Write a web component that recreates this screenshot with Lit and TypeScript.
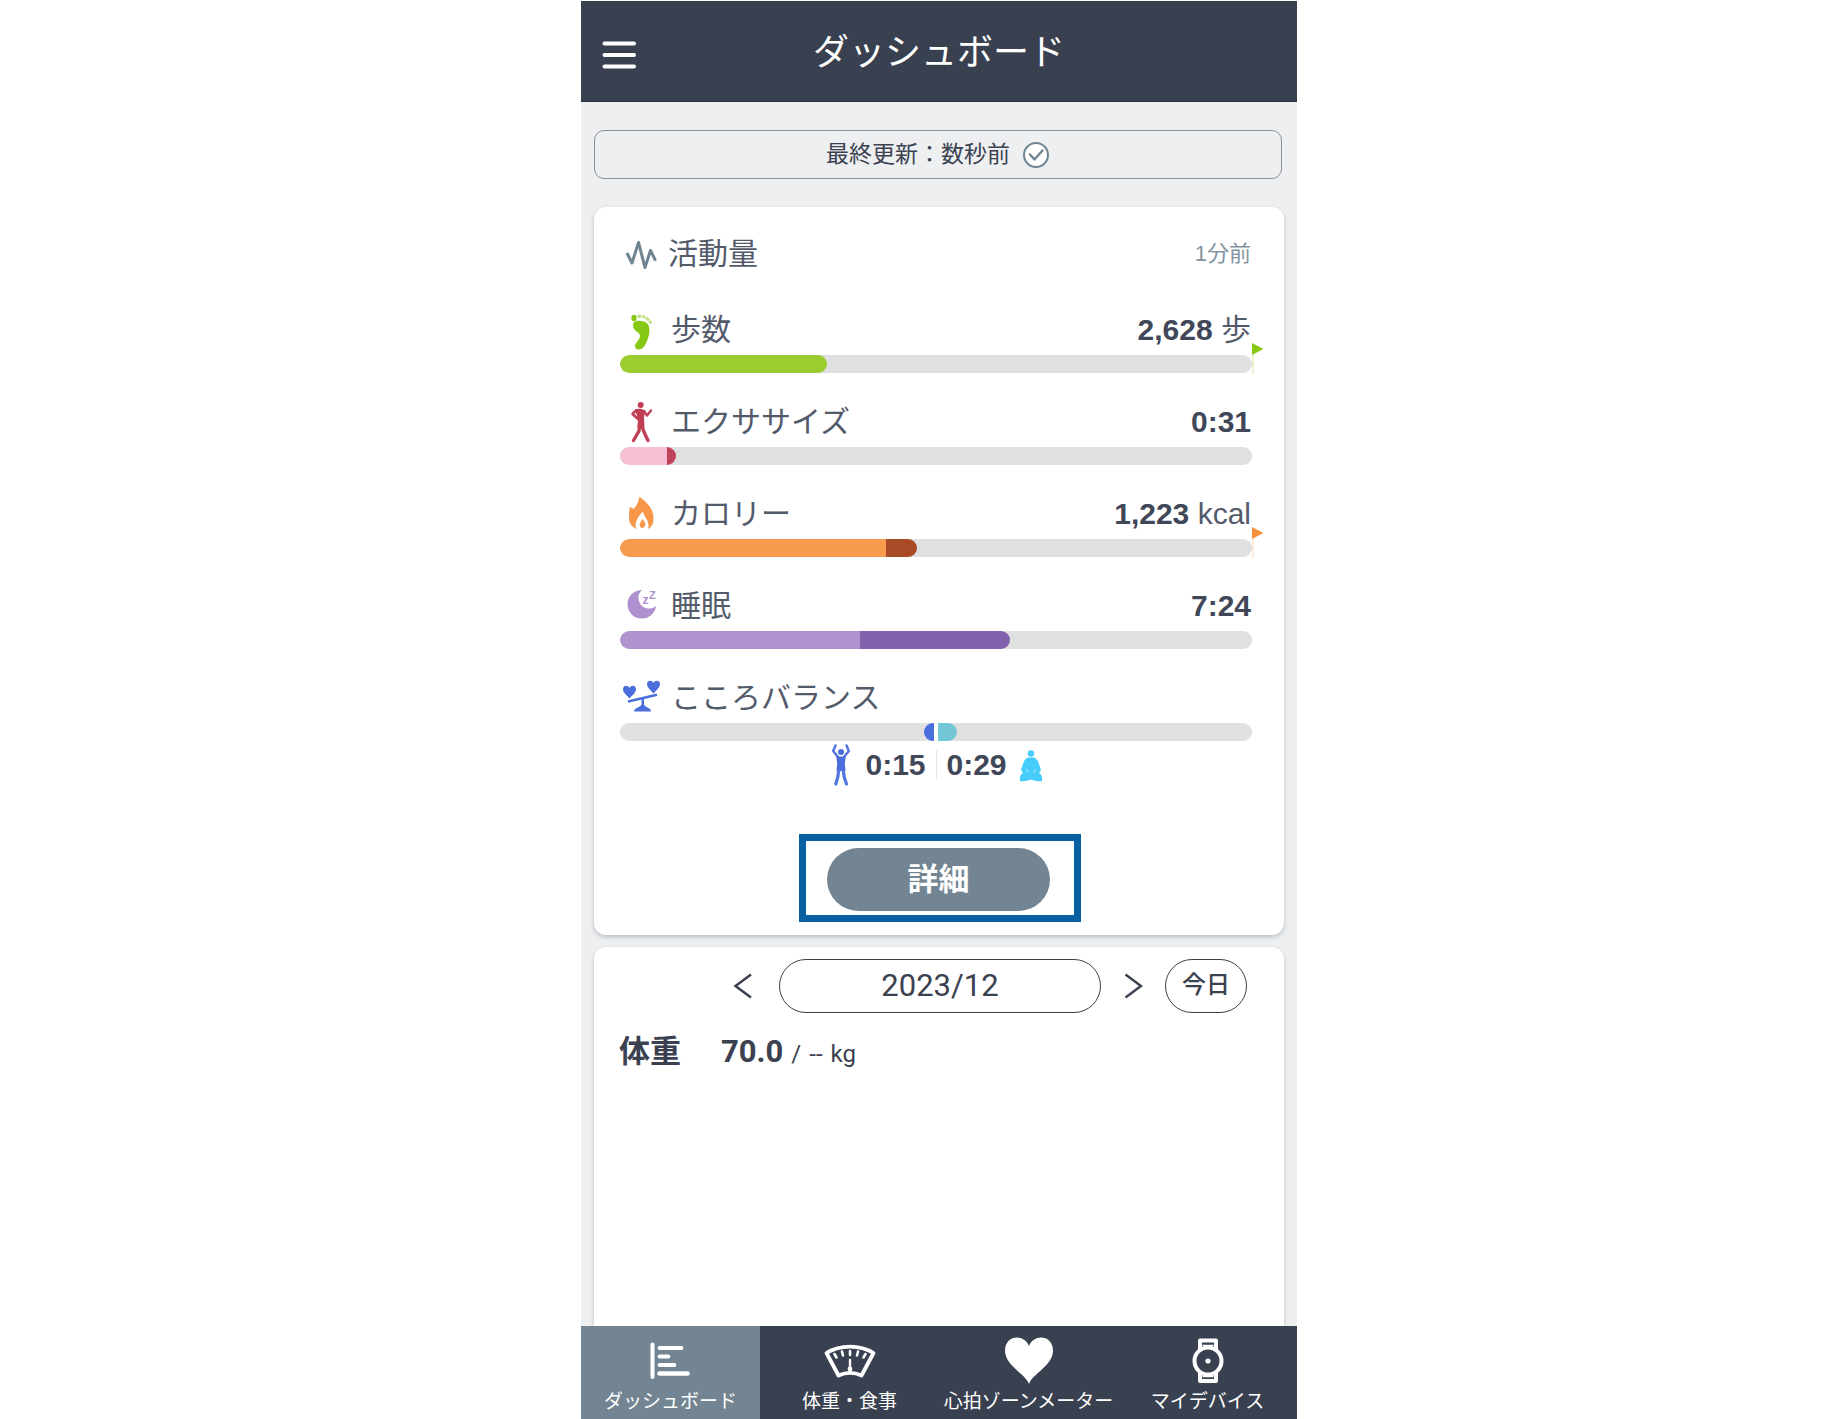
import { LitElement, html, css, nothing, TemplateResult } from "lit";
import { customElement, property } from "lit/decorators.js";

interface Segment {
  start: number;
  width: number;
  color: string;
}

interface Metric {
  label: string;
  value?: string;
  unit?: string;
  icon: TemplateResult;
  segments: Segment[];
  goal?: string;
}

const pulseIcon = html`<svg width="42" height="42" viewBox="0 0 42 42" fill="none" stroke="#708492" stroke-width="3" stroke-linejoin="round" stroke-linecap="round" aria-hidden="true">
  <path d="M7.5 21L12 30L18.500 9.500L25 34.500L30.500 17.500L35 26.500" />
</svg>`;

const footIcon = html`<svg width="42" height="42" viewBox="0 0 42 42" fill="#86c814" aria-hidden="true">
  <path d="M13 16.500C13 11 19 11.500 24 12.500C29.500 14 30 20 29 26C27 33 24 40.500 19 40.500C14.500 40.500 14 36.500 16.500 33.500C20 29 21.500 26.500 18 23.500C15 21.500 13 19.500 13 16.500Z" />
  <ellipse cx="14" cy="9" rx="2.600" ry="3.200" />
  <path d="M17.500 7.500C23 6.500 28 8.500 31 14.500" fill="none" stroke="#86c814" stroke-width="2.800" stroke-dasharray="3.600 0.900" opacity="0.550" />
</svg>`;

const walkIcon = html`<svg width="42" height="42" viewBox="0 0 42 42" fill="none" stroke="#c03f55" stroke-linecap="round" stroke-linejoin="round" aria-hidden="true">
  <circle cx="20.700" cy="4" r="3" fill="#c03f55" stroke="none" />
  <path d="M15 8.500C18 7.500 22 7.500 25 9.500L24 17L24.500 26L17.500 26L18 18Z" fill="#c03f55" stroke="none" />
  <path d="M16 9.500L12.500 13L18 18" stroke-width="2.600" />
  <path d="M24 10L27 14.500L31 9.500" stroke-width="2.400" />
  <path d="M19.500 24L19 30L13.500 39.500" stroke-width="3.400" />
  <path d="M21.500 24L24 31L28 39.500" stroke-width="3.400" />
</svg>`;

const flameIcon = html`<svg width="42" height="42" viewBox="0 0 42 42" fill="#f6974a" aria-hidden="true">
  <path fill-rule="evenodd" d="M19.500 4C25 7.500 33.500 15 33.500 25C33.500 30 32.500 33.500 28 36C29 33 28.500 30 27 27C25.500 24 23.500 22 23 18.500C20 21 17.500 25 16 29C15.200 31.500 15.500 34 16.500 36C12 34 9 30 9 25C9 21 9.500 17 9.500 14C11 14.500 12 15 13.500 16C16.500 13.500 18 9 19.500 4Z" />
  <path d="M22.500 26C24.500 28.500 26 30.500 25 33C24 35.500 20.500 35.500 19.800 33C19.300 30.500 21 28.500 22.500 26Z" />
</svg>`;

const moonIcon = html`<svg width="42" height="42" viewBox="0 0 42 42" fill="#ae90cf" aria-hidden="true">
  <path d="M22 5A14.300 14.300 0 1 0 36 21A10.600 10.600 0 1 1 22 5Z" />
  <text x="22.500" y="19" font-family="Liberation Sans, sans-serif" font-weight="700" font-size="12">z</text>
  <text x="29" y="14" font-family="Liberation Sans, sans-serif" font-weight="700" font-size="11">Z</text>
</svg>`;

const balanceIcon = html`<svg width="42" height="42" viewBox="0 0 42 42" fill="#4a6fdc" aria-hidden="true">
  <path d="M9.500 21.500C6 17.500 3 15.500 3 12C3 8 8 7.500 9.500 11C11 7.500 16 8 16 12C16 15.500 13 17.500 9.500 21.500Z" />
  <path d="M33.500 16.500C30 12.500 27 10.500 27 7C27 3 32 2.500 33.500 6C35 2.500 40 3 40 7C40 10.500 37 12.500 33.500 16.500Z" />
  <path d="M8 24.500L37 17.800" fill="none" stroke="#4a6fdc" stroke-width="2.600" />
  <path d="M21.500 21H24V28C26 30.500 31 31 31 34.500H14C14 31 19.500 30.500 21.500 28Z" />
</svg>`;

const armsUpIcon = html`<svg width="24" height="44" viewBox="0 0 24 44" fill="none" stroke="#5476e0" stroke-linecap="round" stroke-linejoin="round" aria-hidden="true">
  <circle cx="12" cy="9" r="3" fill="#4a6fdc" stroke="none" />
  <path d="M6.500 2.500L4.200 8L9 14M17.500 2.500L19.800 8L15 14" stroke-width="2.500" />
  <path d="M7 12C10 14 14 14 17 12L15.800 20L16.500 28H7.500L8.200 20Z" fill="#4a6fdc" stroke="none" />
  <path d="M9.800 27L8.800 34L6.800 41M14.200 27L15.200 34L17.500 41" stroke-width="3.200" />
</svg>`;

const meditateIcon = html`<svg width="24" height="44" viewBox="0 0 24 44" fill="#45ccfb" aria-hidden="true">
  <circle cx="12" cy="10.500" r="3.200" />
  <path d="M9 14.500H15C19.500 16 20 22 22 27L20 30C22.500 31 23.500 34 23 38C19 38.500 16 38 12 36.500C8 38 5 38.500 1 38C.500 34 1.500 31 4 30L2 27C4 22 4.500 16 9 14.500Z" />
  <path d="M7 26L9.500 29.500M17 26L14.500 29.500" stroke="#fff" stroke-width="1.200" opacity="0.500" />
</svg>`;

const metrics: Metric[] = [
  {
    label: "歩数",
    value: "2,628",
    unit: "歩",
    icon: footIcon,
    goal: "#86c814",
    segments: [{ start: 0, width: 32.8, color: "#9acd2f" }],
  },
  {
    label: "エクササイズ",
    value: "0:31",
    icon: walkIcon,
    segments: [
      { start: 0, width: 7.5, color: "#f9bfd5" },
      { start: 7.5, width: 1.3, color: "#c0435a" },
    ],
  },
  {
    label: "カロリー",
    value: "1,223",
    unit: "kcal",
    icon: flameIcon,
    goal: "#f6923e",
    segments: [
      { start: 0, width: 42.1, color: "#f69a4e" },
      { start: 42.1, width: 4.9, color: "#a94a26" },
    ],
  },
  {
    label: "睡眠",
    value: "7:24",
    icon: moonIcon,
    segments: [
      { start: 0, width: 37.9, color: "#b092cf" },
      { start: 37.9, width: 23.8, color: "#8161ae" },
    ],
  },
  {
    label: "こころバランス",
    icon: balanceIcon,
    segments: [
      { start: 48.1, width: 1.6, color: "#4a6fdc" },
      { start: 49.7, width: 0.6, color: "#ffffff" },
      { start: 50.3, width: 3.1, color: "#74c7d6" },
    ],
  },
];

@customElement("metric-row")
export class MetricRow extends LitElement {
  @property({ attribute: false }) metric!: Metric;

  static styles = css`
    :host {
      display: block;
    }
    .head {
      display: flex;
      align-items: center;
      height: 42px;
      margin-bottom: 4px;
      padding-right: 1px;
      font-size: 30px;
      line-height: 42px;
      color: #535b6b;
    }
    .head svg {
      flex: none;
    }
    .label {
      margin-left: 9px;
      flex: 1;
    }
    .value {
      font-family: "Liberation Sans", "Noto Sans CJK JP", sans-serif;
      color: #535b6b;
    }
    .value strong {
      color: #3f4758;
    }
    .track {
      position: relative;
      height: 18px;
    }
    .bar {
      position: relative;
      height: 100%;
      border-radius: 9px;
      background: #e0e0e0;
      overflow: hidden;
    }
    .segment {
      position: absolute;
      top: 0;
      bottom: 0;
    }
    .segment.first {
      border-radius: 9px 0 0 9px;
    }
    .segment.last {
      border-radius: 0 9px 9px 0;
    }
    .segment.first.last {
      border-radius: 9px;
    }
    .flag {
      position: absolute;
      left: 100%;
      top: -12px;
    }
  `;

  render() {
    const m = this.metric;
    const last = m.segments.length - 1;
    return html`
      <div class="head">
        ${m.icon}
        <span class="label">${m.label}</span>
        ${m.value
          ? html`<span class="value"><strong>${m.value}</strong>${m.unit ? ` ${m.unit}` : nothing}</span>`
          : nothing}
      </div>
      <div class="track">
        <div class="bar">
          ${m.segments.map(
            (s, i) => html`<div
              class="segment ${i === 0 ? "first" : ""} ${i === last ? "last" : ""}"
              style="left:${s.start}%;width:${s.width}%;background:${s.color}"
            ></div>`
          )}
        </div>
        ${m.goal
          ? html`<svg class="flag" width="13" height="32" viewBox="0 0 13 32" aria-hidden="true">
              <path d="M0 0L11.500 6L0 12Z" fill=${m.goal} />
              <path d="M1 12V31" stroke=${m.goal} stroke-width="1.500" opacity="0.250" />
            </svg>`
          : nothing}
      </div>
    `;
  }
}

@customElement("app-root")
export class AppRoot extends LitElement {
  static styles = css`
    :host {
      display: grid;
      grid-template-columns: 581fr minmax(min(100%, 716px), 716fr) 538fr;
      min-height: 100vh;
      background: #fff;
      font-family: Roboto, "Noto Sans CJK JP", sans-serif;
      color: #3b4150;
    }
    *,
    *::before {
      box-sizing: border-box;
    }
    button {
      font: inherit;
      color: inherit;
      background: none;
      border: 0;
      padding: 0;
      cursor: pointer;
    }
    .app {
      grid-column: 2;
      display: flex;
      flex-direction: column;
      margin-top: 1px;
      background: #edeff1;
    }
    .topbar {
      display: grid;
      grid-template-columns: 80px 1fr 80px;
      align-items: center;
      height: 101px;
      background: #394050;
      border-bottom: 1px solid #2b303c;
      color: #fff;
    }
    .menu {
      justify-self: start;
      display: flex;
      margin: 8px 0 0 21px;
    }
    h1 {
      margin: 4px 0 0;
      text-align: center;
      font-size: 36px;
      line-height: 48px;
      font-weight: 400;
    }
    main {
      flex: 1;
      display: flex;
      flex-direction: column;
      padding: 28px 13px 0;
    }
    .status {
      display: flex;
      align-items: center;
      justify-content: center;
      gap: 12px;
      height: 49px;
      margin: 0 2px 28px 0;
      border: 1px solid #8b9096;
      border-radius: 10px;
      font-size: 23px;
      line-height: 32px;
    }
    .card {
      background: #fff;
      border-radius: 12px;
      box-shadow: 0 2px 4px rgba(40, 50, 60, 0.25);
    }
    .activity {
      display: flex;
      flex-direction: column;
      padding: 26px 32px 13px 26px;
      margin-bottom: 12px;
    }
    .activity-head {
      display: flex;
      align-items: center;
      height: 42px;
      margin-bottom: 34px;
      padding-right: 1px;
    }
    h2 {
      margin: 0 0 0 6px;
      flex: 1;
      font-size: 30px;
      line-height: 42px;
      font-weight: 400;
      color: #535b6b;
    }
    .ago {
      font-family: "Liberation Sans", "Noto Sans CJK JP", sans-serif;
      font-size: 22px;
      line-height: 32px;
      color: #84939f;
    }
    .metrics {
      display: flex;
      flex-direction: column;
      gap: 28px;
    }
    .balance {
      display: flex;
      align-items: center;
      justify-content: center;
      gap: 12px;
      height: 44px;
      margin-top: 2px;
      font-family: "Liberation Sans", sans-serif;
      font-size: 30px;
      line-height: 42px;
      font-weight: 700;
      color: #3f4758;
    }
    .times {
      display: flex;
      align-items: center;
      gap: 10px;
    }
    .divider {
      width: 1px;
      height: 30px;
      background: #e4e6e8;
    }
    .highlight {
      align-self: center;
      margin: 47px 0 0 8px;
      padding: 7px 24px 4px 21px;
      border: 7px solid #0861a3;
    }
    .detail {
      display: block;
      width: 223px;
      height: 63px;
      border-radius: 32px;
      background: #738592;
      color: #fff;
      font-size: 31px;
      font-weight: 700;
      line-height: 42px;
    }
    .weight {
      flex: 1;
      padding: 12px 37px 40px 25px;
      border-radius: 12px 12px 0 0;
    }
    .picker {
      display: flex;
      align-items: center;
      justify-content: flex-end;
      gap: 20px;
    }
    .arrow {
      display: flex;
      padding: 4px 2px;
    }
    .arrow.prev {
      margin-right: 4px;
    }
    .month,
    .today {
      height: 54px;
      border: 1px solid #3d3f44;
      border-radius: 27px;
    }
    .month {
      width: 322px;
      font-size: 31px;
      line-height: 42px;
    }
    .today {
      width: 82px;
      padding-bottom: 3px;
      font-size: 24px;
      line-height: 32px;
      font-weight: 500;
    }
    .reading {
      display: flex;
      align-items: baseline;
      gap: 8px;
      margin: 18px 0 0;
      font-size: 24px;
      line-height: 42px;
    }
    .reading .name {
      margin-right: 32px;
      font-size: 31px;
      font-weight: 700;
    }
    .reading strong {
      font-size: 31px;
    }
    .tabs {
      display: grid;
      grid-template-columns: repeat(4, 1fr);
      position: sticky;
      bottom: 0;
      height: 93px;
      background: #394050;
    }
    .tab {
      display: flex;
      flex-direction: column;
      align-items: center;
      padding-top: 10px;
      color: #fff;
      font-size: 19px;
      line-height: 28px;
      text-decoration: none;
      white-space: nowrap;
    }
    .tab svg {
      margin-bottom: 2px;
    }
    .tab.active {
      background: #738592;
    }
  `;

  render() {
    return html`
      <div class="app">
        <header class="topbar">
          <button class="menu" aria-label="メニュー">
            <svg width="34" height="28" viewBox="0 0 34 28" stroke="#fff" stroke-width="4" stroke-linecap="round" aria-hidden="true">
              <path d="M2.500 2.500H32M2.500 14H32M2.500 25.500H32" />
            </svg>
          </button>
          <h1>ダッシュボード</h1>
        </header>

        <main>
          <div class="status">
            <span>最終更新：数秒前</span>
            <svg width="28" height="28" viewBox="0 0 28 28" fill="#fff" stroke="#708492" stroke-width="2" stroke-linecap="round" stroke-linejoin="round" aria-hidden="true">
              <circle cx="14" cy="14" r="12" />
              <path d="M8 13.500L12.500 18.500L20.500 9.500" fill="none" stroke-width="2.400" />
            </svg>
          </div>

          <section class="card activity">
            <div class="activity-head">
              ${pulseIcon}
              <h2>活動量</h2>
              <span class="ago">1分前</span>
            </div>
            <div class="metrics">
              ${metrics.map((m) => html`<metric-row .metric=${m}></metric-row>`)}
            </div>
            <div class="balance">
              ${armsUpIcon}
              <div class="times">
                <span>0:15</span>
                <span class="divider"></span>
                <span>0:29</span>
              </div>
              ${meditateIcon}
            </div>
            <div class="highlight"><button class="detail">詳細</button></div>
          </section>

          <section class="card weight">
            <div class="picker">
              <button class="arrow prev" aria-label="前の月">
                <svg width="20" height="28" viewBox="0 0 20 28" fill="none" stroke="#3b4150" stroke-width="2.500" aria-hidden="true">
                  <path d="M18 2.500L2.500 14L18 25.500" />
                </svg>
              </button>
              <button class="month">2023/12</button>
              <button class="arrow" aria-label="次の月">
                <svg width="20" height="28" viewBox="0 0 20 28" fill="none" stroke="#3b4150" stroke-width="2.500" aria-hidden="true">
                  <path d="M2.500 2.500L18 14L2.500 25.500" />
                </svg>
              </button>
              <button class="today">今日</button>
            </div>
            <p class="reading">
              <span class="name">体重</span>
              <strong>70.0</strong>
              <span>/</span>
              <span>--</span>
              <span>kg</span>
            </p>
          </section>
        </main>

        <nav class="tabs">
          <a class="tab active" href="#dashboard" aria-current="page">
            <svg width="50" height="50" viewBox="0 0 50 50" fill="none" stroke="#fff" stroke-linecap="round" aria-hidden="true">
              <path d="M6.500 8.500V41" stroke-width="4" />
              <path d="M13.500 12H35.500M13.500 20.500H22.500M13.500 29H28.500" stroke-width="3.800" />
              <path d="M13.500 37.500H41.500" stroke-width="4.600" />
            </svg>
            ダッシュボード
          </a>
          <a class="tab" href="#weight">
            <svg width="54" height="50" viewBox="0 0 54 50" fill="none" stroke="#fff" stroke-linecap="round" stroke-linejoin="round" aria-hidden="true">
              <path d="M3.500 17C17 8.500 37 8.500 50.500 17L38.500 39.500C31 36 23 36 15.500 39.500Z" stroke-width="3.800" />
              <path d="M11.500 18L13.500 21.500M19 15.500L20 19.500M27 15V19M35 15.500L34 19.500M42.500 18L40.500 21.500" stroke-width="2.600" />
              <path d="M27 24V36" stroke-width="2.400" />
              <circle cx="27" cy="33" r="2.400" fill="#fff" stroke="none" />
            </svg>
            体重・食事
          </a>
          <a class="tab" href="#heart">
            <svg width="50" height="50" viewBox="0 0 50 50" fill="#fff" aria-hidden="true">
              <path d="M25 48C22 38 1 30 1 14.500C1-1 20-3 25 10C30-3 49-1 49 14.500C49 30 28 38 25 48Z" />
            </svg>
            心拍ゾーンメーター
          </a>
          <a class="tab" href="#device">
            <svg width="50" height="50" viewBox="0 0 50 50" fill="none" stroke="#fff" stroke-width="4" stroke-linejoin="round" aria-hidden="true">
              <path d="M17 14V4.500H33V14M17 36V45H33V36" />
              <circle cx="25" cy="25" r="13.500" />
              <path d="M19.500 9.500H30.500M19.500 40.500H30.500" stroke-width="1.500" />
              <circle cx="25" cy="25" r="2.600" fill="#fff" stroke="none" />
            </svg>
            マイデバイス
          </a>
        </nav>
      </div>
    `;
  }
}
